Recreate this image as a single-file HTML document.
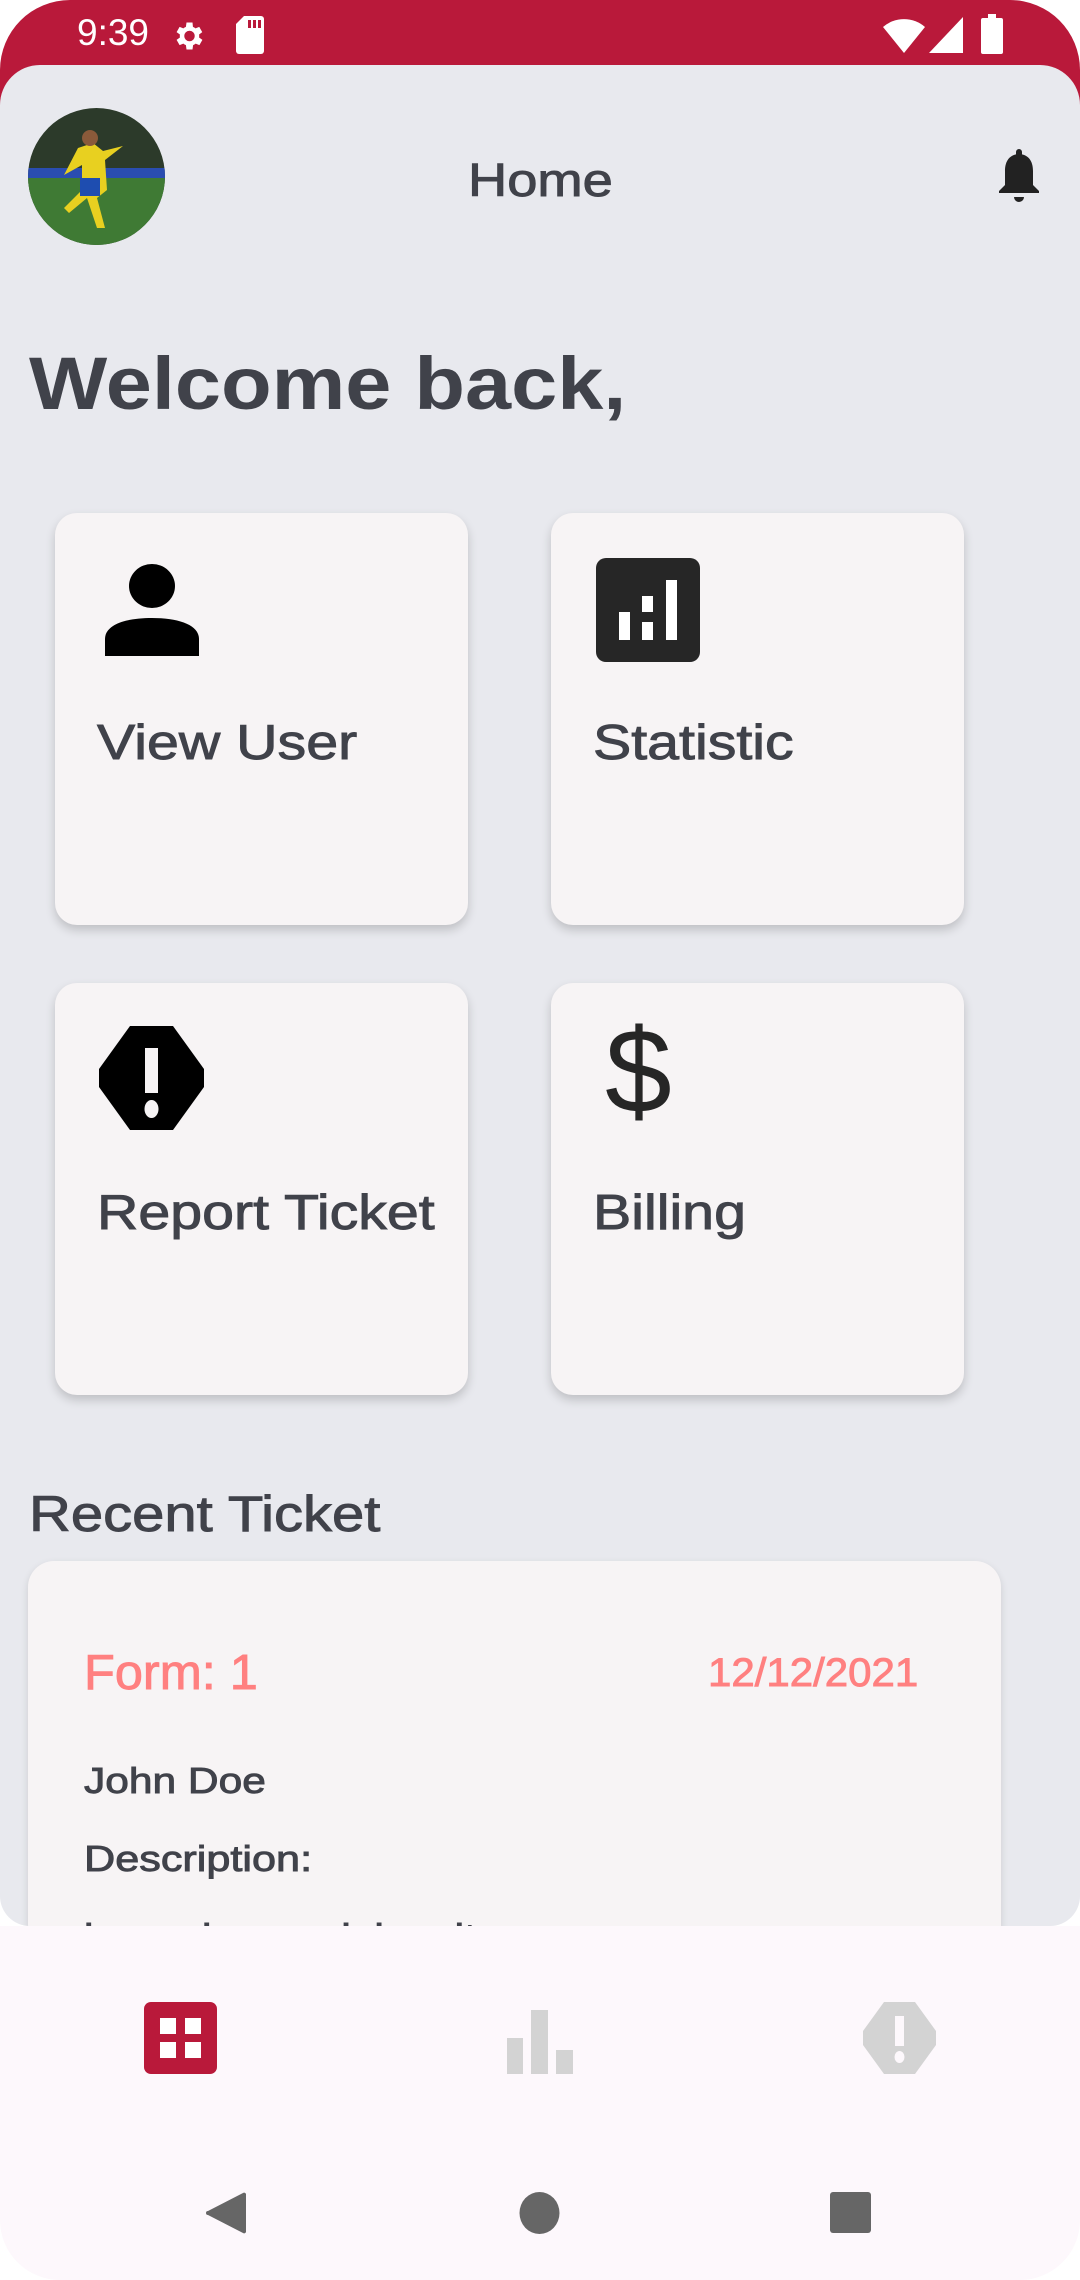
<!DOCTYPE html>
<html><head><meta charset="utf-8"><style>
*{margin:0;padding:0;box-sizing:border-box}
body{width:1080px;height:2280px;position:relative;overflow:hidden;background:#fff;font-family:"Liberation Sans",sans-serif;color:#40424a}
.status{position:absolute;left:0;top:0;width:1080px;height:120px;background:#b9193a;border-radius:70px 70px 0 0}
.main{position:absolute;left:0;top:65px;width:1080px;height:1861px;background:#e8e9ee;border-radius:40px 40px 30px 30px;overflow:hidden}
.card{position:absolute;width:413px;height:412px;background:#f7f4f5;border-radius:22px;box-shadow:0 5px 10px rgba(0,0,0,.18)}
.t{transform-origin:0 50%;white-space:nowrap;-webkit-text-stroke:0.9px currentColor}
.lbl{position:absolute;left:42px;font-size:49px;color:#40424a;transform:scaleX(1.17)}
.nav{position:absolute;left:0;top:1926px;width:1080px;height:354px;background:#fdf8fc;border-radius:0 0 60px 60px}
.abs{position:absolute}
</style></head><body>
<div class="status">
 <div class="abs" style="left:77px;top:12px;font-size:37px;color:#fff">9:39</div>
 <svg class="abs" style="left:170px;top:18px" width="36" height="36" viewBox="0 0 24 24"><path fill="#fff" d="M19.4 13a7.5 7.5 0 000-2l2.1-1.6-2-3.5-2.5 1a7 7 0 00-1.7-1L15 3h-4l-.4 2.9a7 7 0 00-1.7 1l-2.5-1-2 3.5L6.6 11a7.5 7.5 0 000 2l-2.2 1.6 2 3.5 2.5-1a7 7 0 001.7 1L11 21h4l.4-2.9a7 7 0 001.7-1l2.5 1 2-3.5zM13 15.5a3.5 3.5 0 110-7 3.5 3.5 0 010 7z"/></svg>
 <svg class="abs" style="left:236px;top:16px" width="28" height="38" viewBox="0 0 28 38"><path fill="#fff" d="M8 0h17a3 3 0 013 3v32a3 3 0 01-3 3H3a3 3 0 01-3-3V8z"/><path fill="#b9193a" d="M12 4h3v8h-3zM17 4h3v8h-3zM22 4h3v8h-3z"/></svg>
 <svg class="abs" style="left:883px;top:17px" width="42" height="36" viewBox="0 0 42 36"><path fill="#fff" d="M0 10a32 32 0 0142 0L21 36z"/></svg>
 <svg class="abs" style="left:929px;top:17px" width="34" height="36" viewBox="0 0 34 36"><path fill="#fff" d="M34 0v36H0z"/></svg>
 <svg class="abs" style="left:981px;top:14px" width="22" height="40" viewBox="0 0 22 40"><path fill="#fff" d="M7 0h8v4h5a2 2 0 012 2v32a2 2 0 01-2 2H2a2 2 0 01-2-2V6a2 2 0 012-2h5z"/></svg>
</div>
<div class="main">
 <svg class="abs" style="left:28px;top:43px" width="137" height="137" viewBox="0 0 137 137"><defs><clipPath id="c"><circle cx="68.5" cy="68.5" r="68.5"/></clipPath></defs><g clip-path="url(#c)"><rect width="137" height="137" fill="#2c3a2a"/><rect y="60" width="137" height="12" fill="#2a4db0"/><rect y="70" width="137" height="67" fill="#3f7a34"/><path d="M50 40l15-5 10 8 20-5-18 14 2 30-10 8 8 30h-8l-10-30-18 15-5-5 18-18 0-25-18 10z" fill="#e8d020"/><path d="M52 70h20v18H52z" fill="#1e4db0"/><circle cx="62" cy="30" r="8" fill="#8a5a3a"/></g></svg>
 <div class="abs t" style="left:468px;top:88px;font-size:46px;color:#40424a;transform:scaleX(1.18)">Home</div>
 <svg class="abs" style="left:995px;top:84px" width="48" height="56" viewBox="0 0 24 28"><path fill="#222" d="M12 0a1.5 1.5 0 011.5 1.5v1.2C17.5 3.6 19 7 19 11v7l3 3v1H2v-1l3-3v-7c0-4 1.5-7.4 5.5-8.3V1.5A1.5 1.5 0 0112 0zm-2.5 24h5a2.5 2.5 0 01-5 0z"/></svg>
 <div class="abs" style="left:29px;top:276px;font-size:74px;font-weight:bold;color:#40424a;transform:scaleX(1.12);transform-origin:0 50%;white-space:nowrap">Welcome back,</div>

 <div class="card" style="left:55px;top:448px">
  <svg class="abs" style="left:50px;top:51px" width="94" height="92" viewBox="0 0 94 92"><ellipse cx="47" cy="22" rx="23" ry="22" fill="#000"/><path d="M0 92V75c0-14 20-21 47-21s47 7 47 21v17z" fill="#000"/></svg>
  <div class="lbl t" style="top:202px">View User</div>
 </div>
 <div class="card" style="left:551px;top:448px">
  <svg class="abs" style="left:45px;top:45px" width="104" height="104" viewBox="0 0 104 104"><rect width="104" height="104" rx="10" fill="#262626"/><rect x="23" y="54" width="11" height="28" fill="#fff"/><rect x="46" y="38" width="11" height="16" fill="#fff"/><rect x="46" y="64" width="11" height="18" fill="#fff"/><rect x="70" y="22" width="11" height="60" fill="#fff"/></svg>
  <div class="lbl t" style="top:202px">Statistic</div>
 </div>
 <div class="card" style="left:55px;top:918px">
  <svg class="abs" style="left:44px;top:43px" width="105" height="104" viewBox="0 0 105 104"><path d="M31 0h43l31 43v18L74 104H31L0 61V43z" fill="#000"/><rect x="46" y="22" width="13" height="45" fill="#f7f4f5"/><ellipse cx="52.5" cy="83" rx="7" ry="9" fill="#f7f4f5"/></svg>
  <div class="lbl t" style="top:202px">Report Ticket</div>
 </div>
 <div class="card" style="left:551px;top:918px">
  <div class="abs" style="left:54px;top:28px;font-size:120px;color:#262626;line-height:1">$</div>
  <div class="lbl t" style="top:202px">Billing</div>
 </div>

 <div class="abs t" style="left:29px;top:1420px;font-size:50px;color:#40424a;transform:scaleX(1.16)">Recent Ticket</div>
 <div class="abs" style="left:28px;top:1496px;width:973px;height:500px;background:#f7f4f5;border-radius:26px;box-shadow:0 3px 8px rgba(0,0,0,.12)">
  <div class="abs t" style="left:56px;top:84px;font-size:49px;color:#ff8080;transform:scaleX(1.03)">Form: 1</div>
  <div class="abs t" style="left:680px;top:90px;font-size:40px;color:#ff8080;transform:scaleX(1.05)">12/12/2021</div>
  <div class="abs t" style="left:56px;top:199px;font-size:36px;color:#40424a;transform:scaleX(1.18)">John Doe</div>
  <div class="abs t" style="left:56px;top:277px;font-size:36px;color:#40424a;transform:scaleX(1.2)">Description:</div>
  <div class="abs t" style="left:56px;top:355px;font-size:36px;color:#40424a;transform:scaleX(1.18)">lorem ipsum dolor sit</div>
 </div>
</div>
<div class="nav">
 <svg class="abs" style="left:144px;top:76px" width="73" height="72" viewBox="0 0 73 72"><rect width="73" height="72" rx="7" fill="#b9193a"/><rect x="16" y="16" width="16" height="16" fill="#fff"/><rect x="41" y="16" width="16" height="16" fill="#fff"/><rect x="16" y="40" width="16" height="16" fill="#fff"/><rect x="41" y="40" width="16" height="16" fill="#fff"/></svg>
 <svg class="abs" style="left:507px;top:84px" width="66" height="64" viewBox="0 0 66 64"><rect x="0" y="28" width="16" height="36" fill="#d3d3d3"/><rect x="24" y="0" width="17" height="64" fill="#d3d3d3"/><rect x="49" y="40" width="17" height="24" fill="#d3d3d3"/></svg>
 <svg class="abs" style="left:863px;top:76px" width="73" height="72" viewBox="0 0 73 72"><path d="M21 0h31l21 29v14L52 72H21L0 43V29z" fill="#d3d3d3"/><rect x="32" y="14" width="9" height="30" fill="#fdf8fc"/><ellipse cx="36.5" cy="55" rx="5" ry="6" fill="#fdf8fc"/></svg>
 <svg class="abs" style="left:206px;top:266px" width="40" height="42" viewBox="0 0 40 42"><path d="M40 2v38a2 2 0 01-3 1L2 23a2 2 0 010-4L37 1a2 2 0 013 1z" fill="#666"/></svg>
 <svg class="abs" style="left:519px;top:266px" width="41" height="42"><ellipse cx="20.5" cy="21" rx="20" ry="21" fill="#666"/></svg>
 <svg class="abs" style="left:830px;top:266px" width="41" height="41"><rect width="41" height="41" rx="3" fill="#666"/></svg>
</div>
</body></html>
